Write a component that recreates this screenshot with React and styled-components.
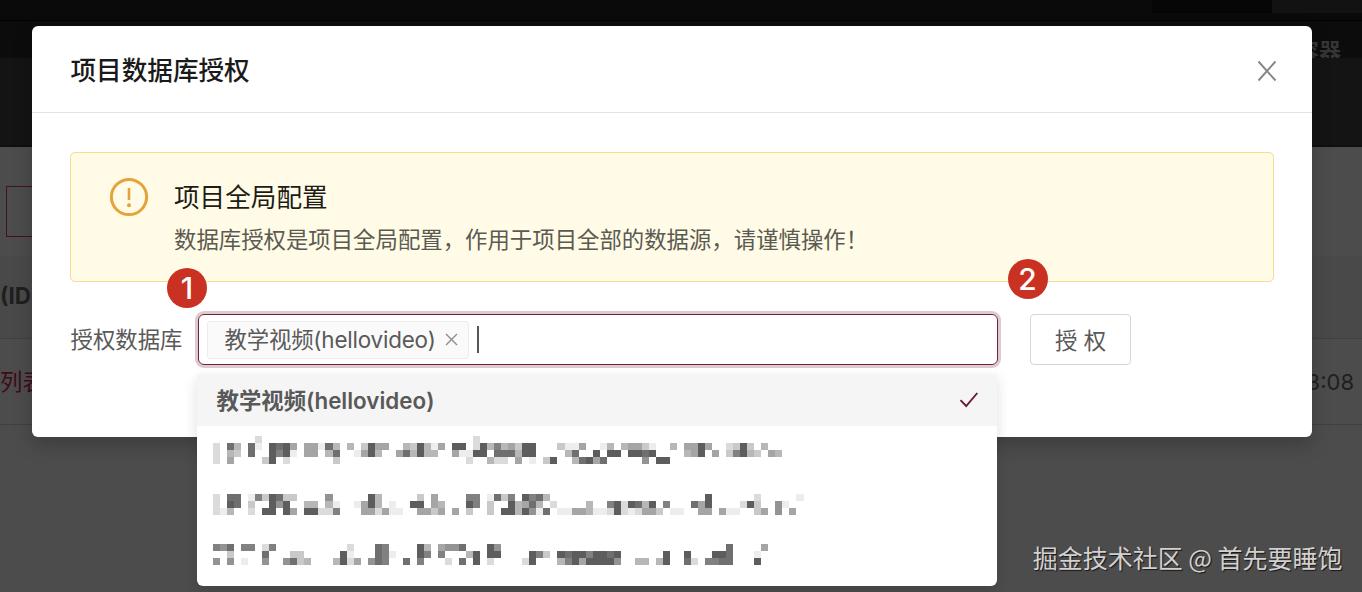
import React from "react";
import styled, { createGlobalStyle } from "styled-components";

const GlobalStyle = createGlobalStyle`
  *, *::before, *::after { box-sizing: border-box; }
  html, body { margin: 0; padding: 0; }
  body {
    width: 1362px;
    height: 592px;
    overflow: hidden;
    background: #4c4c4c;
    font-family: Inter, "Noto Sans CJK SC", sans-serif;
    font-size: 22.4px;
    color: #595959;
  }
`;

/* ---------- dimmed page behind the dialog ---------- */

const Page = styled.div`
  position: relative;
  width: 1362px;
  height: 592px;
  overflow: hidden;
  display: flex;
  flex-direction: column;
`;

const TopBar = styled.div`
  height: 21px;
  flex: none;
  display: flex;
  justify-content: flex-end;
  background: #0a0a0a;
  border-bottom: 1px solid #000;
`;

const TopBarTab = styled.div`
  width: ${(p) => p.$width}px;
  height: 13px;
  background: ${(p) => p.$color};
`;

const NavBar = styled.div`
  height: 37px;
  flex: none;
  display: flex;
  justify-content: flex-end;
  overflow: hidden;
  padding: 15px 21px 0 0;
  background: #0c0c0c;
  color: #353535;
  font-size: 22px;
  font-weight: 700;
  line-height: 30px;
`;

const Banner = styled.div`
  height: 89px;
  flex: none;
  background: #141414;
  border-bottom: 2px solid #0f0f0f;
`;

const Content = styled.div`
  flex: 1;
  display: flex;
  flex-direction: column;
  background: #4c4c4c;
`;

const FilterBar = styled.div`
  height: 109px;
  display: flex;
  padding: 39px 0 0 6px;
`;

const FilterButton = styled.div`
  width: 100px;
  height: 51px;
  border: 1px solid #45101f;
`;

const TableRow = styled.div`
  height: ${(p) => p.$height}px;
  display: flex;
  align-items: center;
  justify-content: space-between;
  padding: 0 8px ${(p) => (p.$head ? 3 : 0)}px 0;
  background: ${(p) => (p.$head ? "#494949" : "transparent")};
  border-bottom: 1px solid #404040;
  color: #1f1f1f;
  font-weight: ${(p) => (p.$head ? 700 : 400)};
`;

const RowLink = styled.span`
  padding-bottom: 3px;
  color: #3d0b19;
`;

const Time = styled.span`
  font-size: 22px;
`;

/* ---------- dialog ---------- */

const Overlay = styled.div`
  position: absolute;
  inset: 0;
  padding: 26px 50px 0 32px;
`;

const Dialog = styled.section`
  height: 411px;
  background: #fff;
  border-radius: 6px;
  box-shadow: 0 8px 20px rgba(0, 0, 0, 0.2);
`;

const DialogHeader = styled.header`
  height: 87px;
  display: flex;
  align-items: center;
  justify-content: space-between;
  padding: 0 35px 0 38.5px;
  border-bottom: 1px solid #e4e4e4;
`;

const DialogTitle = styled.h1`
  margin: 3px 0 0;
  font-size: 25.6px;
  font-weight: 500;
  line-height: 38px;
  color: #1a1a1a;
`;

const CloseIcon = styled.svg`
  width: 20px;
  height: 22px;
  margin-top: 3px;
  stroke: #858585;
  stroke-width: 1.9;
`;

const DialogBody = styled.div`
  padding: 39px 38px 0;
`;

const Alert = styled.div`
  height: 130px;
  display: flex;
  gap: 25px;
  padding: 24px 0 0 38px;
  background: #fffbe6;
  border: 1px solid #f7dd94;
  border-radius: 5px;
`;

const AlertIcon = styled.svg`
  width: 40px;
  height: 40px;
  flex: none;
  fill: none;
  stroke: #e5a33b;
`;

const AlertTitle = styled.div`
  padding-top: 1px;
  font-size: 25.6px;
  line-height: 40px;
  color: #1c1b16;
`;

const AlertText = styled.div`
  margin-top: 3px;
  line-height: 38px;
  color: #5b5a52;
`;

const FormRow = styled.div`
  display: flex;
  align-items: center;
  height: 51px;
  margin-top: 32px;
`;

const Label = styled.label`
  width: 128px;
  flex: none;
  padding: 1px 0 0 0.5px;
  line-height: 36px;
`;

const Select = styled.div`
  width: 800px;
  height: 51px;
  flex: none;
  display: flex;
  align-items: center;
  gap: 8px;
  padding: 0 8px;
  border: 1.5px solid #72203f;
  border-radius: 6px;
  box-shadow: 0 0 0 3px #decad1;
`;

const Tag = styled.span`
  width: 262px;
  height: 38px;
  display: flex;
  align-items: center;
  justify-content: space-between;
  padding: 0 10px 0 16.5px;
  background: #fafafa;
  border: 1px solid #ededed;
  border-radius: 3px;
  line-height: 36px;
  white-space: nowrap;
`;

const TagText = styled.span`
  letter-spacing: -0.18px;
`;

const OptionText = styled.span`
  padding-bottom: 3px;
`;

const TagClose = styled.svg`
  width: 13px;
  height: 13px;
  stroke: #8c8c8c;
  stroke-width: 1.4;
`;

const Caret = styled.span`
  width: 2px;
  height: 27px;
  margin-bottom: 1px;
  background: #555;
`;

const Button = styled.button`
  width: 101px;
  height: 51px;
  margin-left: 32px;
  padding: 0 0 1px;
  background: #fff;
  border: 1px solid #d6d6d6;
  border-radius: 4px;
  font: inherit;
  color: #595959;
`;

/* ---------- dropdown ---------- */

const Dropdown = styled.div`
  position: absolute;
  left: 197px;
  top: 374px;
  width: 800px;
  height: 212px;
  background: #fff;
  border-radius: 0 0 6px 6px;
  box-shadow: 0 5px 14px rgba(0, 0, 0, 0.13);
`;

const Option = styled.div`
  height: 52px;
  display: flex;
  align-items: center;
  justify-content: space-between;
  padding: 0 18px 0 ${(p) => (p.$selected ? 19.5 : 16)}px;
  background: ${(p) => (p.$selected ? "#f5f5f5" : "transparent")};
  font-weight: ${(p) => (p.$selected ? 600 : 400)};
`;

const CheckIcon = styled.svg`
  width: 20px;
  height: 18px;
  fill: none;
  stroke: #6b1a35;
  stroke-width: 1.9;
`;

const Mosaic = styled.svg`
  width: 591px;
  height: 28px;
  margin-top: ${(p) => p.$shift}px;
`;

const CELL = 7.03;

const maskedOptions = [
  {
    shift: -4,
    rows: [
      "000000200000000000000000000000000000020000000000000000000000000000000000000000000000",
      "208408109895055184040395500439415099029474539900031150014045531004055950023930400000",
      "204308009791055048001594005849440051199088849900004800909909989000045905037943054000",
      "205000039020000003000000000000000000200422050103900489580000060990000000000000000000",
    ],
  },
  {
    shift: -6,
    rows: [
      "000000000000000000000000000000000000000000000000000000000000000000000000000000000000",
      "208801739833000060000094000003050000770183709784000000000000000000000090000002000001",
      "209803009690044041001594010099054000970300945840200004007929849070008590000293006100",
      "214002099095099227000552511005535050300309949618011554112921255301100550511003506050",
    ],
  },
  {
    shift: -10,
    rows: [
      "000000000000000000000000000000000000000000000000000000000000000000000000000000000000",
      "768077027000000000020008700009405668000960000000000000000000000000000000080000500000",
      "003000080003300000910008710009707000490990000973098997998900000090090009980001000000",
      "606010060068340004925068700807000208090200002900047959999600440490082077880009000000",
    ],
  },
];

function MaskedText({ rows, shift }) {
  return (
    <Mosaic $shift={shift} viewBox="0 0 591 28">
      {rows.map((row, y) =>
        [...row].map((level, x) => {
          if (level === "0") return null;
          const shade = 255 - Number(level) * 18;
          const left = Math.round(x * CELL);
          const right = Math.round((x + 1) * CELL);
          return (
            <rect
              key={`${x}-${y}`}
              x={left}
              y={y * 7}
              width={right - left}
              height={7}
              fill={`rgb(${shade},${shade},${shade})`}
            />
          );
        })
      )}
    </Mosaic>
  );
}

/* ---------- annotations ---------- */

const StepBadge = styled.div`
  position: absolute;
  left: ${(p) => p.$x}px;
  top: ${(p) => p.$y}px;
  width: 40px;
  height: 40px;
  display: flex;
  align-items: center;
  justify-content: center;
  border-radius: 50%;
  background: #c93122;
  color: #fff;
  font-size: 30px;
  font-weight: 500;
  line-height: 40px;
`;

const Watermark = styled.div`
  position: absolute;
  right: 19.5px;
  bottom: 17px;
  font-family: "Noto Sans CJK SC", sans-serif;
  font-size: 25px;
  line-height: 36px;
  color: #d2d0d0;
  text-shadow: 1px 1px 1px #161616;
  white-space: nowrap;
`;

export default function App() {
  return (
    <>
      <GlobalStyle />
      <Page>
        <TopBar>
          <TopBarTab $width={120} $color="#060606" />
          <TopBarTab $width={90} $color="#121212" />
        </TopBar>
        <NavBar>容器</NavBar>
        <Banner />
        <Content>
          <FilterBar>
            <FilterButton />
          </FilterBar>
          <TableRow $head $height={83}>
            <span>(ID</span>
          </TableRow>
          <TableRow $height={86}>
            <RowLink>列表</RowLink>
            <Time>3:08</Time>
          </TableRow>
        </Content>

        <Overlay>
          <Dialog>
            <DialogHeader>
              <DialogTitle>项目数据库授权</DialogTitle>
              <CloseIcon viewBox="0 0 20 22">
                <path d="M1.5 1.5 18.5 20.5M18.5 1.5 1.5 20.5" />
              </CloseIcon>
            </DialogHeader>
            <DialogBody>
              <Alert>
                <AlertIcon viewBox="0 0 40 40">
                  <circle cx="20" cy="20" r="17.6" strokeWidth="3" />
                  <path d="M20 11v12" strokeWidth="2.6" />
                  <circle cx="20" cy="28.2" r="2" fill="#e5a33b" stroke="none" />
                </AlertIcon>
                <div>
                  <AlertTitle>项目全局配置</AlertTitle>
                  <AlertText>
                    数据库授权是项目全局配置，作用于项目全部的数据源，请谨慎操作！
                  </AlertText>
                </div>
              </Alert>
              <FormRow>
                <Label>授权数据库</Label>
                <Select>
                  <Tag>
                    <TagText>教学视频(hellovideo)</TagText>
                    <TagClose viewBox="0 0 13 13">
                      <path d="M1 1 12 12M12 1 1 12" />
                    </TagClose>
                  </Tag>
                  <Caret />
                </Select>
                <Button>授 权</Button>
              </FormRow>
            </DialogBody>
          </Dialog>
        </Overlay>

        <Dropdown>
          <Option $selected>
            <OptionText>教学视频(hellovideo)</OptionText>
            <CheckIcon viewBox="0 0 20 18">
              <path d="M1.5 9.2 7.2 15 18.3 2" />
            </CheckIcon>
          </Option>
          {maskedOptions.map((option) => (
            <Option key={option.rows[1]}>
              <MaskedText rows={option.rows} shift={option.shift} />
            </Option>
          ))}
        </Dropdown>

        <StepBadge $x={167} $y={267.5}>1</StepBadge>
        <StepBadge $x={1007.5} $y={259}>2</StepBadge>
        <Watermark>掘金技术社区 @ 首先要睡饱</Watermark>
      </Page>
    </>
  );
}
